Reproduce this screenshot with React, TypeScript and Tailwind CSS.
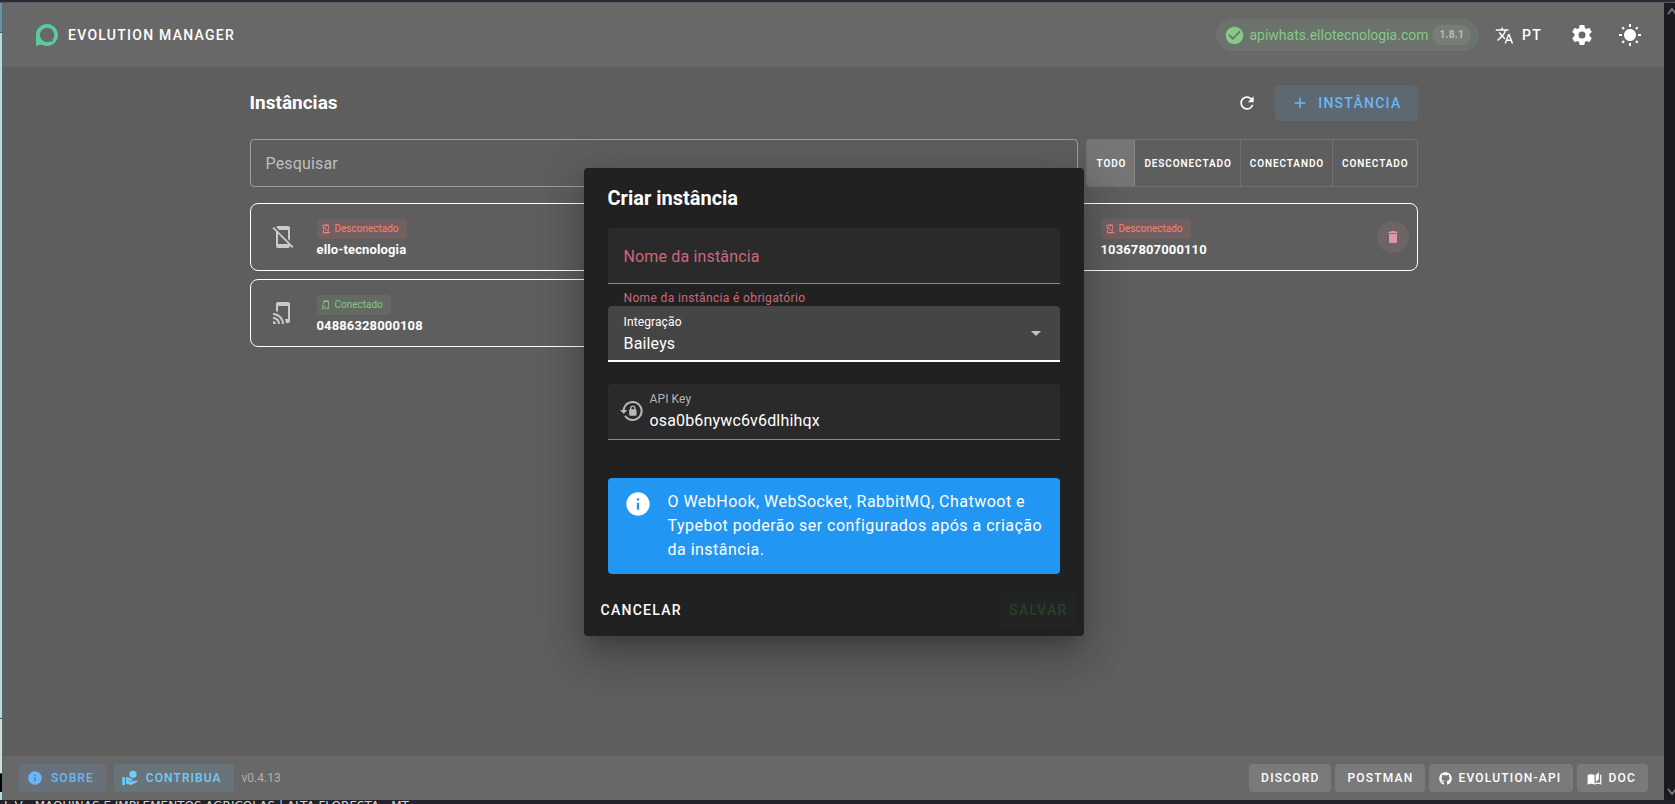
import { ReactNode, useState } from "react";
import { MdAdd, MdCheckCircle, MdInfo, MdRefresh, MdTapAndPlay, MdTranslate } from "react-icons/md";
import { FaGithub } from "react-icons/fa";

type IconProps = { size?: number; className?: string };

const Svg = ({ size = 24, className, d }: IconProps & { d: string }) => (
  <svg width={size} height={size} viewBox="0 0 24 24" fill="currentColor" className={className} aria-hidden="true">
    <path d={d} />
  </svg>
);

const icons = {
  cog: "M12,15.5A3.5,3.5 0 0,1 8.5,12A3.5,3.5 0 0,1 12,8.5A3.5,3.5 0 0,1 15.5,12A3.5,3.5 0 0,1 12,15.5M19.43,12.97C19.47,12.65 19.5,12.33 19.5,12C19.5,11.67 19.47,11.34 19.43,11L21.54,9.37C21.73,9.22 21.78,8.95 21.66,8.73L19.66,5.27C19.54,5.05 19.27,4.96 19.05,5.05L16.56,6.05C16.04,5.66 15.5,5.32 14.87,5.07L14.5,2.42C14.46,2.18 14.25,2 14,2H10C9.75,2 9.54,2.18 9.5,2.42L9.13,5.07C8.5,5.32 7.96,5.66 7.44,6.05L4.95,5.05C4.73,4.96 4.46,5.05 4.34,5.27L2.34,8.73C2.21,8.95 2.27,9.22 2.46,9.37L4.57,11C4.53,11.34 4.5,11.67 4.5,12C4.5,12.33 4.53,12.65 4.57,12.97L2.46,14.63C2.27,14.78 2.21,15.05 2.34,15.27L4.34,18.73C4.46,18.95 4.73,19.03 4.95,18.95L7.44,17.94C7.96,18.34 8.5,18.68 9.13,18.93L9.5,21.58C9.54,21.82 9.75,22 10,22H14C14.25,22 14.46,21.82 14.5,21.58L14.87,18.93C15.5,18.67 16.04,18.34 16.56,17.94L19.05,18.95C19.27,19.03 19.54,18.95 19.66,18.73L21.66,15.27C21.78,15.05 21.73,14.78 21.54,14.63L19.43,12.97Z",
  sun: "M3.55 19.09L4.96 20.5L6.76 18.71L5.34 17.29M12 6C8.69 6 6 8.69 6 12S8.69 18 12 18 18 15.31 18 12C18 8.68 15.31 6 12 6M20 13H23V11H20M17.24 18.71L19.04 20.5L20.45 19.09L18.66 17.29M20.45 5L19.04 3.6L17.24 5.39L18.66 6.81M13 1H11V4H13M6.76 5.39L4.96 3.6L3.55 5L5.34 6.81L6.76 5.39M1 13H4V11H1M13 20H11V23H13",
  lockReset:
    "M12.63,2C18.16,2 22.64,6.5 22.64,12C22.64,17.5 18.16,22 12.63,22C9.12,22 6.05,20.18 4.26,17.43L5.84,16.18C7.25,18.47 9.76,20 12.64,20A8,8 0 0,0 20.64,12A8,8 0 0,0 12.64,4C8.56,4 5.2,7.06 4.71,11H7.47L3.73,14.73L0,11H2.69C3.19,5.95 7.45,2 12.63,2M15.59,10.24C16.09,10.25 16.5,10.65 16.5,11.16V15.77C16.5,16.27 16.09,16.69 15.58,16.69H10.05C9.54,16.69 9.13,16.27 9.13,15.77V11.16C9.13,10.65 9.54,10.25 10.04,10.24V9.23C10.04,7.7 11.29,6.46 12.81,6.46C14.34,6.46 15.59,7.7 15.59,9.23V10.24M12.81,7.86C12.06,7.86 11.44,8.47 11.44,9.23V10.24H14.19V9.23C14.19,8.47 13.57,7.86 12.81,7.86Z",
  trash: "M19,4H15.5L14.5,3H9.5L8.5,4H5V6H19M6,19A2,2 0 0,0 8,21H16A2,2 0 0,0 18,19V7H6V19Z",
  phoneOff:
    "M1.5 3.3L2.8 2L22.5 21.7L21.2 23L19 20.8V21A2 2 0 0 1 17 23H7A2 2 0 0 1 5 21V6.8L1.5 3.3M7 8.8V19H17V18.8L7 8.8M5.2 1.9C5.6 1.3 6.3 1 7 1H17A2 2 0 0 1 19 3V15.9L17 13.9V5H8.2L5.2 1.9Z",
  handCoin:
    "M16.5 1A5.5 5.5 0 1 1 16.5 12A5.5 5.5 0 1 1 16.5 1M0.5 11H4.5V22.5H0.5V11M6 11H8.5L15 13.4C15.8 13.7 16.2 14.4 16 15.2C15.8 16 15.2 16.3 14.4 16.3H11.5L9.8 15.7L9.5 16.6L11.5 17.4H16.5L20.5 15.8C22 15.3 23.3 16.3 23.4 17.6L13.5 22.5L6 20.3V11Z",
  book: "M19 2L14 6.5V17.5L19 13V2M6.5 5C4.55 5 2.45 5.4 1 6.5V21.16C1 21.41 1.25 21.66 1.5 21.66C1.6 21.66 1.65 21.59 1.75 21.59C3.1 20.94 5.05 20.5 6.5 20.5C8.45 20.5 10.55 20.9 12 22C13.35 21.15 15.8 20.5 17.5 20.5C19.15 20.5 20.85 20.81 22.25 21.56C22.35 21.61 22.4 21.59 22.5 21.59C22.75 21.59 23 21.34 23 21.09V6.5C22.4 6.05 21.75 5.75 21 5.5V19C19.9 18.65 18.7 18.5 17.5 18.5C15.8 18.5 13.35 19.15 12 20V6.5C10.55 5.4 8.45 5 6.5 5Z",
};

const Logo = () => (
  <svg width="22" height="22" viewBox="0 0 22 22" aria-hidden="true">
    <path
      fill="#12b070"
      fillRule="evenodd"
      d="M11 0A11 11 0 1 1 5.6 20.6L0 22V11A11 11 0 0 1 11 0ZM11 3.8A7.2 7.2 0 1 0 14 17.6L16.8 18.1L16.4 15.8A7.2 7.2 0 0 0 11 3.8Z"
    />
  </svg>
);

const StatusChip = ({ connected }: { connected: boolean }) => (
  <span
    className={
      connected
        ? "flex h-5 w-fit items-center gap-1 rounded bg-[#4caf50]/12 px-2 pl-1 text-[10px] text-[#4caf50]"
        : "flex h-5 w-fit items-center gap-1 rounded bg-[#f44336]/12 px-2 pl-1 text-[10px] text-[#f44336]"
    }
  >
    {connected ? <MdTapAndPlay size={10} /> : <Svg size={10} d={icons.phoneOff} />}
    {connected ? "Conectado" : "Desconectado"}
  </span>
);

const InstanceCard = ({ name, connected }: { name: string; connected: boolean }) => (
  <div className="flex h-[68px] items-center rounded-lg border border-white pr-2 pl-5">
    <div className="w-[46px] text-[#b2b2b2]">
      {connected ? <MdTapAndPlay size={24} /> : <Svg d={icons.phoneOff} />}
    </div>
    <div className="flex-1 pt-1">
      <StatusChip connected={connected} />
      <h5 className="mt-px text-[13px] leading-5 font-bold tracking-[0.01em]">{name}</h5>
    </div>
    <button
      aria-label={`Excluir ${name}`}
      className="flex size-8 items-center justify-center rounded-full bg-[#cf6679]/12 text-[#cf6679]"
    >
      <Svg size={16} d={icons.trash} />
    </button>
  </div>
);

const FooterButton = ({ children, icon }: { children: ReactNode; icon?: ReactNode }) => (
  <a
    href="#"
    className={
      icon
        ? "flex h-7 items-center gap-[6px] rounded bg-white/12 pr-3 pl-[10px] text-xs font-medium tracking-widest"
        : "flex h-7 items-center rounded bg-white/12 px-3 text-xs font-medium tracking-widest"
    }
  >
    {icon}
    {children}
  </a>
);

const filters = ["TODO", "DESCONECTADO", "CONECTANDO", "CONECTADO"];

const CreateDialog = () => {
  const [name, setName] = useState("");
  const [apiKey, setApiKey] = useState("osa0b6nywc6v6dlhihqx");

  return (
    <div
      role="dialog"
      aria-labelledby="dialog-title"
      className="w-full max-w-[500px] rounded bg-[#212121] shadow-[0_11px_15px_-7px_rgba(0,0,0,0.2),0_24px_38px_3px_rgba(0,0,0,0.14),0_9px_46px_8px_rgba(0,0,0,0.12)]"
    >
      <form>
        <div className="px-6 pt-4">
          <h2 id="dialog-title" className="text-xl leading-7 font-bold">
            Criar instância
          </h2>
          <div className="mt-4 flex h-14 items-center rounded-t border-b border-[#cf6679] bg-[#2a2a2a] px-4 pt-1">
            <label htmlFor="name" className="shrink-0 tracking-[0.01em] text-[#cf6679]">
              Nome da instância
            </label>
            <input
              id="name"
              value={name}
              onChange={(e) => setName(e.target.value)}
              className="w-full min-w-0 bg-transparent outline-none"
            />
          </div>
          <p className="h-[22px] px-4 pt-[6px] text-xs tracking-[0.03em] text-[#cf6679]">
            Nome da instância é obrigatório
          </p>
          <div className="flex h-14 items-center rounded-t border-b-2 border-white bg-[#454545] pr-3 pl-4">
            <div className="flex-1 pt-1">
              <label htmlFor="integration" className="block text-xs tracking-[0.01em]">
                Integração
              </label>
              <select
                id="integration"
                className="block w-full appearance-none bg-transparent pt-[2px] leading-6 tracking-[0.01em] outline-none"
              >
                <option>Baileys</option>
              </select>
            </div>
            <Svg className="text-[#c4c4c4]" d="M7,10L12,15L17,10H7Z" />
          </div>
          <div className="mt-[22px] flex h-14 items-center gap-[6px] rounded-t border-b border-[#8a8a8a] bg-[#2a2a2a] px-3">
            <Svg className="text-[#b9b9b9]" d={icons.lockReset} />
            <div className="flex-1 pt-[2px]">
              <label htmlFor="api-key" className="block text-xs tracking-[0.01em] text-[#b4b4b4]">
                API Key
              </label>
              <input
                id="api-key"
                value={apiKey}
                onChange={(e) => setApiKey(e.target.value)}
                className="block w-full bg-transparent pt-[2px] leading-6 tracking-[0.01em] outline-none"
              />
            </div>
          </div>
          <div className="mt-[38px] flex gap-4 rounded bg-[#2196f3] py-3 pr-3 pl-4">
            <MdInfo size={28} className="shrink-0" />
            <p className="leading-6 tracking-[0.03em]">
              O WebHook, WebSocket, RabbitMQ, Chatwoot e Typebot poderão ser configurados após a criação da instância.
            </p>
          </div>
        </div>
        <div className="mt-[10px] flex justify-between p-2 text-sm font-medium tracking-[0.09em]">
          <button type="button" className="h-9 rounded px-[9px]">
            CANCELAR
          </button>
          <button type="submit" disabled className="h-9 rounded bg-[#222423] px-2 text-[#284029]">
            SALVAR
          </button>
        </div>
      </form>
    </div>
  );
};

export default function App() {
  return (
    <div className="flex h-screen flex-col bg-[#2b2a33] font-['Roboto',sans-serif] text-white">
      <div className="h-[3px] shrink-0 border-b border-[#5b5866]" />
      <div className="flex min-h-0 flex-1">
        <div className="flex w-[3px] shrink-0 flex-col border-r border-[#5a6a6c] bg-[#b5dbd8]">
          <div className="h-[30px] border-b border-[#555] bg-[#6c93a5]" />
          <div className="flex-1" />
          <div className="h-14 border-y border-[#555] bg-[#d5d9dc]" />
          <div className="h-[18px] bg-black" />
          <div className="h-2" />
        </div>

        <div className="relative flex min-w-0 flex-1 flex-col bg-[#121212]">
          <header className="flex h-16 shrink-0 items-center bg-[#212121] pr-[10px] pl-[33px]">
            <Logo />
            <span className="ml-[10px] text-sm font-medium tracking-[0.09em]">EVOLUTION MANAGER</span>
            <div className="ml-auto flex h-8 items-center rounded-full bg-[#4caf50]/12 px-2 text-sm text-[#4caf50]">
              <MdCheckCircle size={21} />
              <span className="ml-1">apiwhats.ellotecnologia.com</span>
              <span className="ml-1 flex h-5 items-center rounded-full bg-white/8 px-[7px] text-[10px] font-bold tracking-[0.03em] text-[#9c9c9c]">
                1.8.1
              </span>
            </div>
            <button className="flex h-9 items-center gap-2 px-4 text-sm font-medium tracking-[0.09em]">
              <MdTranslate size={19} />
              PT
            </button>
            <button aria-label="Configurações" className="flex size-12 items-center justify-center">
              <Svg d={icons.cog} />
            </button>
            <button aria-label="Tema" className="flex size-12 items-center justify-center">
              <Svg d={icons.sun} />
            </button>
          </header>

          <main className="mx-auto w-full max-w-[1200px] flex-1 px-4 pt-[18px]">
            <div className="flex items-center">
              <h3 className="text-[19px] font-bold">Instâncias</h3>
              <button aria-label="Atualizar" className="mr-[10px] ml-auto flex size-9 items-center justify-center">
                <MdRefresh size={20} />
              </button>
              <button className="flex h-9 items-center gap-[9px] rounded bg-[#2196f3]/12 px-4 text-sm font-medium tracking-[0.09em] text-[#2196f3]">
                <MdAdd size={18} />
                INSTÂNCIA
              </button>
            </div>

            <div className="mt-[18px] flex h-12 gap-2">
              <input
                aria-label="Pesquisar"
                placeholder="Pesquisar"
                className="min-w-0 flex-1 rounded border border-[#707070] bg-transparent px-[15px] pt-[2px] tracking-[0.01em] placeholder:text-[#a0a0a0]"
              />
              <div className="flex divide-x divide-white/12 overflow-hidden rounded border border-white/12">
                {filters.map((filter, i) => (
                  <button
                    key={filter}
                    className={
                      i === 0
                        ? "bg-white/15 pr-2 pl-[9px] text-[10px] font-semibold tracking-[0.09em]"
                        : "pr-2 pl-[9px] text-[10px] font-semibold tracking-[0.09em]"
                    }
                  >
                    {filter}
                  </button>
                ))}
              </div>
            </div>

            <div className="mt-4 grid grid-cols-3 gap-2">
              <InstanceCard name="ello-tecnologia" connected={false} />
              <div className="col-start-3">
                <InstanceCard name="10367807000110" connected={false} />
              </div>
              <InstanceCard name="04886328000108" connected />
            </div>
          </main>

          <footer className="flex h-11 shrink-0 items-center bg-[#212121] px-4">
            <button className="flex h-7 items-center gap-2 rounded bg-[#2196f3]/12 px-2 pr-3 text-xs font-medium tracking-[0.09em] text-[#2196f3]">
              <MdInfo size={16} />
              SOBRE
            </button>
            <button className="mx-2 flex h-7 items-center gap-2 rounded bg-[#29b6f6]/12 px-2 pr-3 text-xs font-medium tracking-[0.09em] text-[#29b6f6]">
              <Svg size={16} d={icons.handCoin} />
              CONTRIBUA
            </button>
            <span className="text-xs text-[#8c8c8c]">v0.4.13</span>
            <nav className="ml-auto flex gap-1">
              <FooterButton>DISCORD</FooterButton>
              <FooterButton>POSTMAN</FooterButton>
              <FooterButton icon={<FaGithub size={13} />}>EVOLUTION-API</FooterButton>
              <FooterButton icon={<Svg size={15} d={icons.book} />}>DOC</FooterButton>
            </nav>
          </footer>

          {/* scrim */}
          <div className="absolute inset-0 flex items-center justify-center bg-white/32">
            <CreateDialog />
          </div>
        </div>

        <div className="flex w-[11px] shrink-0 flex-col items-end justify-between overflow-hidden bg-[#1b1a20] py-1 text-[#77767c]">
          <svg width="8" height="8" viewBox="0 0 8 8" fill="none" stroke="currentColor" strokeWidth="2">
            <path d="M1 7L5 2L9 7" />
          </svg>
          <svg width="8" height="8" viewBox="0 0 8 8" fill="none" stroke="currentColor" strokeWidth="2">
            <path d="M1 1L5 6L9 1" />
          </svg>
        </div>
      </div>
      <div className="h-1 shrink-0 overflow-hidden bg-[#23222a] pl-1 font-['DejaVu_Sans',sans-serif] text-xs leading-3 whitespace-pre text-[#d8d8d8]">
        L V - MAQUINAS E IMPLEMENTOS AGRICOLAS | ALTA FLORESTA - MT
      </div>
    </div>
  );
}
